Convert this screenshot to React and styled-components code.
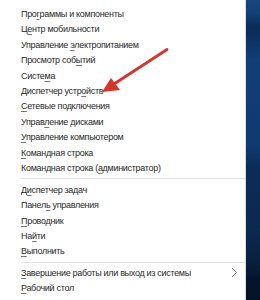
import styled, { createGlobalStyle } from "styled-components";

const GlobalStyle = createGlobalStyle`
  html, body { margin: 0; padding: 0; background: #fff; }
  body { width: 260px; height: 300px; overflow: hidden; }
`

const groups = [
  [
    ["Про", "г", "раммы и компоненты"],
    ["Ц", "е", "нтр мобильности"],
    ["Управление ", "э", "лектропитанием"],
    ["Просмотр соб", "ы", "тий"],
    ["Систе", "м", "а"],
    ["Диспетчер устр", "о", "йств"],
    ["", "С", "етевые подключения"],
    ["Управ", "л", "ение дисками"],
    ["", "У", "правление компьютером"],
    ["", "К", "омандная строка"],
    ["Командная строка (", "а", "дминистратор)"],
  ],
  [
    ["Д", "и", "спетчер задач"],
    ["Панел", "ь", " управления"],
    ["", "П", "роводник"],
    ["На", "й", "ти"],
    ["", "В", "ыполнить"],
  ],
  [
    ["", "З", "авершение работы или выход из системы", true],
    ["", "Р", "абочий стол"],
  ],
]

const Screen = styled.div`
  position: relative;
  display: flex;
  width: 260px;
  height: 300px;
  overflow: hidden;
`

const Menu = styled.div`
  width: 245px;
  padding-top: 6.3px;
  background: #fff;
  border-right: 1px solid #dcdcdc;
  font-family: "Liberation Sans", Arial, sans-serif;
  font-size: 9px;
  letter-spacing: -0.3px;
  color: #2a2a2a;
`

const Desktop = styled.div`
  flex: 1;
  background: linear-gradient(
    to bottom,
    #17477f 0px,
    #114073 14px,
    #0a2d5a 26px,
    #0b2f5d 34px,
    #103f77 60px,
    #0e3b70 145px,
    #0a2c57 170px,
    #0b2a50 230px,
    #09203f 262px,
    #05142c 280px,
    #05132a 300px
  );
`

const Item = styled.div`
  display: flex;
  align-items: center;
  justify-content: space-between;
  height: 15.4px;
  padding: 0 7px 0 21px;
  white-space: nowrap;
`

const Key = styled.span`
  text-decoration: underline;
  text-decoration-thickness: 1px;
  text-underline-offset: 1.5px;
  text-decoration-color: #777;
`

const Divider = styled.div`
  height: ${p => p.$h}px;
  display: flex;
  align-items: center;
  &::after {
    content: "";
    flex: 1;
    height: 1px;
    margin-left: 21px;
    background: #e3e3e3;
  }
`

const Chevron = () => (
  <svg width="7" height="11" viewBox="0 0 7 11">
    <path d="M1 1 L5.5 5.5 L1 10" fill="none" stroke="#8a8a8a" strokeWidth="1" />
  </svg>
)

const Arrow = styled.svg`
  position: absolute;
  left: 0;
  top: 0;
  pointer-events: none;
`

export default function App() {
  return (
    <>
      <GlobalStyle />
      <Screen>
        <Menu>
          {groups.map((g, gi) => (
            <div key={gi}>
              {gi > 0 && <Divider $h={gi === 1 ? 6.6 : 6} />}
              {g.map(([a, k, b, sub]) => (
                <Item key={a + k + b}>
                  <span>
                    {a}
                    <Key>{k}</Key>
                    {b}
                  </span>
                  {sub && <Chevron />}
                </Item>
              ))}
            </div>
          ))}
        </Menu>
        <Desktop />
        <Arrow width="260" height="300" viewBox="0 0 260 300">
          <path d="M167 49.5 L114 84" stroke="#d8342b" strokeWidth="2.8" strokeLinecap="round" />
          <path d="M102 92 L111 78 L120 90 Z" fill="#d8342b" />
        </Arrow>
      </Screen>
    </>
  )
}
